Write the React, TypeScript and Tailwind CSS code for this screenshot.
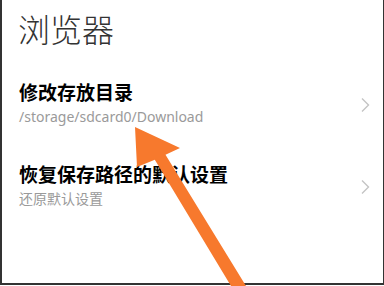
const font = { fontFamily: '"Noto Sans", "Noto Sans CJK SC", sans-serif' }

function Chevron() {
  return (
    <svg width="10" height="16" viewBox="0 0 10 16" className="shrink-0">
      <polyline points="2,1.5 8.5,8 2,14.5" fill="none" stroke="#c4c4c4" strokeWidth="1.4" />
    </svg>
  )
}

function SettingRow({ title, sub, className }: { title: string; sub: string; className: string }) {
  return (
    <div className={`flex items-center justify-between pl-[17px] pr-[13px] ${className}`}>
      <div className="flex flex-col">
        <span className="text-[19px] leading-[19px] font-bold text-black">{title}</span>
        <span className="mt-[5px] text-[14px] leading-[18px] text-[#9a9a9a]">{sub}</span>
      </div>
      <Chevron />
    </div>
  )
}

export default function App() {
  return (
    <div className="relative h-[286px] w-[384px] overflow-hidden bg-white" style={font}>
      <div className="h-[285px] border-b-2 border-l-2 border-r border-[#333]">
        <h1 className="pl-[16px] pt-[14px] text-[32px] leading-[32px] font-light text-[#333]">浏览器</h1>
        <SettingRow className="mt-[38px]" title="修改存放目录" sub="/storage/sdcard0/Download" />
        <SettingRow className="mt-[40px]" title="恢复保存路径的默认设置" sub="还原默认设置" />
      </div>

      {/* annotation arrow */}
      <svg className="pointer-events-none absolute inset-0" width="384" height="286" viewBox="0 0 384 286">
        <polygon
          points="135,127 180,148 165.5,154.7 246,286 231,286 154.8,159.7 137,167"
          fill="#f7792d"
        />
      </svg>
    </div>
  )
}
